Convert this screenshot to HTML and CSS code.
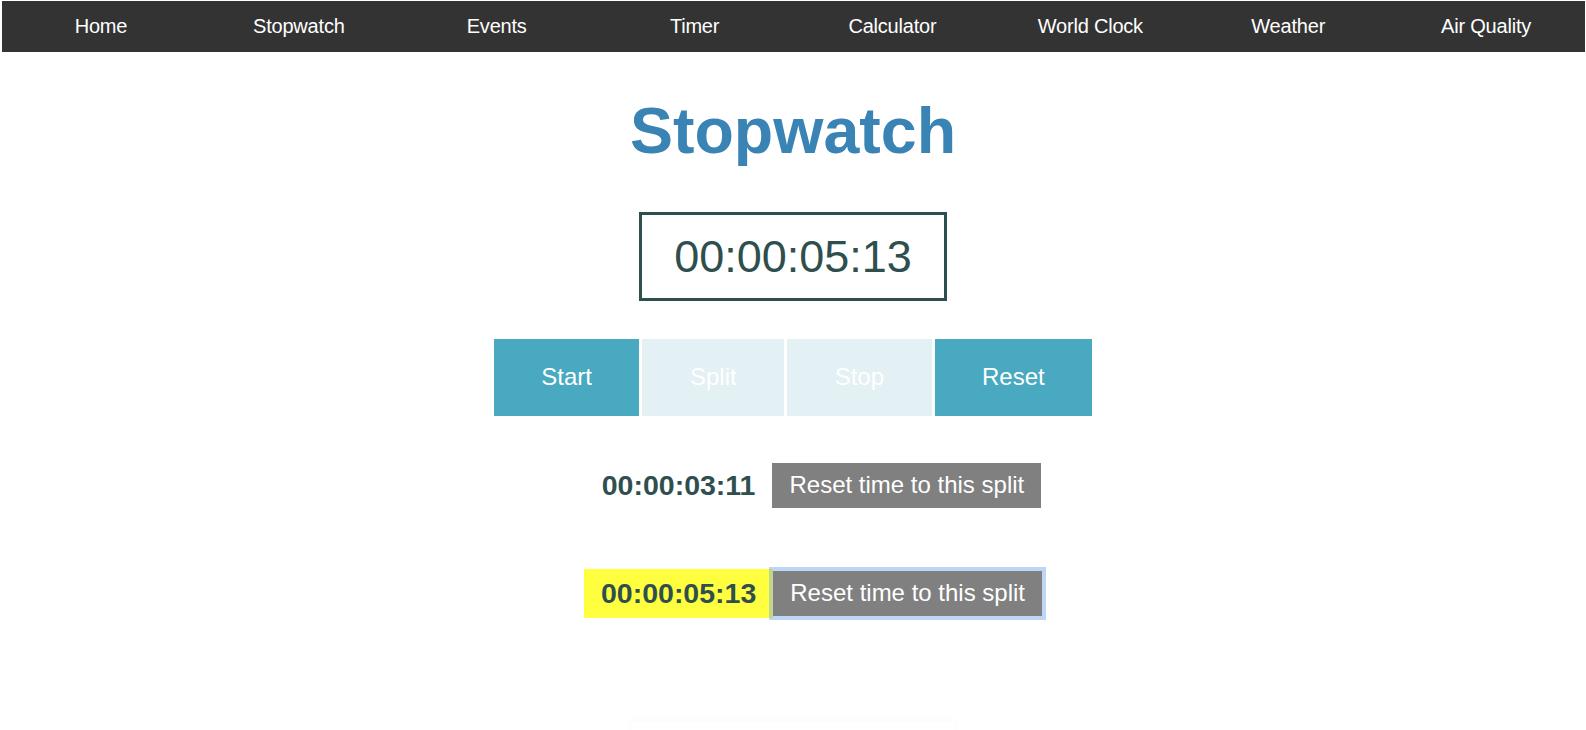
FILE: index.html
```html
<!DOCTYPE html>
<html lang="en">
<head>
<meta charset="utf-8">
<title>Stopwatch</title>
<link rel="stylesheet" href="styles.css">
</head>
<body>
<nav class="topnav">
  <a class="nav-link" href="#">Home</a>
  <a class="nav-link" href="#">Stopwatch</a>
  <a class="nav-link" href="#">Events</a>
  <a class="nav-link" href="#">Timer</a>
  <a class="nav-link" href="#">Calculator</a>
  <a class="nav-link" href="#">World Clock</a>
  <a class="nav-link" href="#">Weather</a>
  <a class="nav-link" href="#">Air Quality</a>
</nav>
<main class="page">
  <h1 class="title">Stopwatch</h1>
  <div class="display">00:00:05:13</div>
  <div class="controls">
    <button class="ctl">Start</button>
    <button class="ctl ctl-disabled" disabled>Split</button>
    <button class="ctl ctl-disabled" disabled>Stop</button>
    <button class="ctl">Reset</button>
  </div>
  <ul class="splits">
    <li class="split">
      <span class="split-time">00:00:03:11</span><button class="split-btn">Reset time to this split</button>
    </li>
    <li class="split">
      <span class="split-time split-current">00:00:05:13</span><button class="split-btn split-focus">Reset time to this split</button>
    </li>
  </ul>
  <div class="below-card"></div>
</main>
</body>
</html>
```

FILE: styles.css
```css
html, body {
  margin: 0;
  padding: 0;
  background: #ffffff;
  overflow: hidden;
  height: 730px;
}

body {
  font-family: "Liberation Sans", Arial, sans-serif;
}

.topnav {
  margin: 1px 1px 0 2px;
  height: 51px;
  background: #333333;
  display: grid;
  grid-template-columns: repeat(8, 1fr);
  align-items: center;
}

.nav-link {
  color: #ffffff;
  text-decoration: none;
  text-align: center;
  font-size: 20px;
  letter-spacing: -0.2px;
}

.page {
  display: flex;
  flex-direction: column;
  align-items: center;
}

.title {
  margin: 43px 0;
  font-size: 64.5px;
  font-weight: bold;
  color: #3a83b5;
  line-height: 73.6px;
}

.display {
  border: 3px solid #2f4f4f;
  padding: 16px 32px;
  font-size: 45px;
  line-height: 51px;
  color: #2f4f4f;
}

.controls {
  margin-top: 38px;
  display: flex;
  gap: 3px;
}

.ctl {
  height: 77px;
  padding: 0 47.5px;
  border: none;
  background: #48a9c0;
  color: #ffffff;
  font-family: "Liberation Sans", Arial, sans-serif;
  font-size: 24px;
}

.ctl-disabled {
  background: #e3f0f4;
  color: #ffffff;
}

.splits {
  list-style: none;
  margin: 45px 0 0;
  padding: 0 0 0 40px;
  align-self: stretch;
  display: flex;
  flex-direction: column;
  gap: 59px;
}

.split {
  display: flex;
  justify-content: center;
  align-items: center;
}

.split-time {
  padding: 8px 17px;
  font-size: 28.5px;
  line-height: 33px;
  font-weight: bold;
  color: #2f4f4f;
}

.split-current {
  background: #ffff40;
}

.split-btn {
  border: none;
  background: #808080;
  color: #ffffff;
  font-family: "Liberation Sans", Arial, sans-serif;
  font-size: 24px;
  line-height: 28px;
  padding: 8.5px 17px;
}

.split-focus {
  outline: 4.5px solid rgba(110, 165, 235, 0.45);
}

.below-card {
  margin-top: 104px;
  width: 322px;
  height: 40px;
  box-shadow: 0 -3px 10px rgba(0, 0, 0, 0.025);
}
```
